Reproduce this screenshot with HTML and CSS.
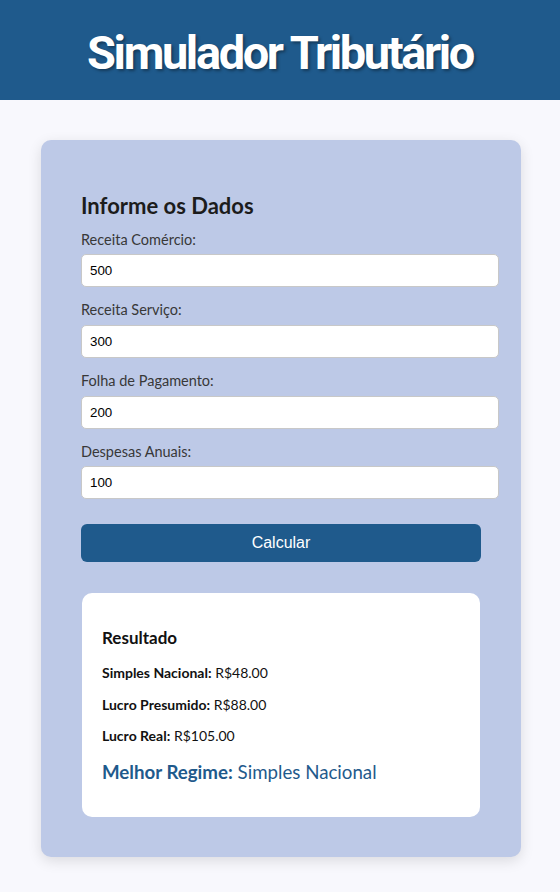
FILE: index.html
```html
<!DOCTYPE html>
<html lang="pt-BR">
<head>
<meta charset="utf-8">
<title>Simulador Tributário</title>
<link rel="stylesheet" href="styles.css">
</head>
<body>
<header class="topbar">
  <h1 class="title">Simulador Tributário</h1>
</header>
<main class="page">
  <section class="card">
    <h2 class="card-title">Informe os Dados</h2>
    <form class="form">
      <label class="field-label" for="com">Receita Comércio:</label>
      <input class="field-input" id="com" type="number" value="500">
      <label class="field-label" for="serv">Receita Serviço:</label>
      <input class="field-input" id="serv" type="number" value="300">
      <label class="field-label" for="folha">Folha de Pagamento:</label>
      <input class="field-input" id="folha" type="number" value="200">
      <label class="field-label" for="desp">Despesas Anuais:</label>
      <input class="field-input" id="desp" type="number" value="100">
      <button class="btn" type="button">Calcular</button>
    </form>
    <div class="result">
      <h3 class="result-title">Resultado</h3>
      <p class="result-line"><strong>Simples Nacional:</strong> R$48.00</p>
      <p class="result-line"><strong>Lucro Presumido:</strong> R$88.00</p>
      <p class="result-line"><strong>Lucro Real:</strong> R$105.00</p>
      <p class="best"><strong>Melhor Regime:</strong> Simples Nacional</p>
    </div>
  </section>
</main>
</body>
</html>
```
FILE: styles.css
```css
* { box-sizing: content-box; }
body {
  margin: 0;
  background: #f8f8fd;
  font-family: Lato, "Noto Sans", sans-serif;
  color: #1a1a1a;
}
.topbar {
  background: #1f5a8c;
  height: 100px;
  display: flex;
  justify-content: center;
  align-items: flex-start;
}
.title {
  margin: 24.5px 0 0;
  font-family: Roboto, sans-serif;
  font-weight: 700;
  font-size: 47px;
  letter-spacing: -2.4px;
  line-height: 56px;
  color: #ffffff;
  text-shadow: 2px 2px 3px rgba(0, 0, 0, 0.35);
}
.page {
  padding: 40px 39px 34px 41px;
}
.card {
  width: 400px;
  padding: 40px;
  background: #bdc9e7;
  border-radius: 10px;
  box-shadow: 0 4px 14px rgba(0, 0, 0, 0.12);
}
.card-title {
  margin: 12px 0 10.5px;
  font-size: 22px;
  line-height: 28px;
  font-weight: 700;
  color: #1c1c1c;
}
.form {
  display: flex;
  flex-direction: column;
  align-items: flex-start;
}
.field-label {
  font-size: 14.5px;
  line-height: 18.67px;
  color: #383838;
  margin-bottom: 5px;
}
.field-input {
  width: 400px;
  height: 15px;
  padding: 8px;
  margin: 0 0 14px;
  border: 1px solid #c8c8c8;
  border-radius: 5px;
  background: #fff;
  font-family: "Liberation Sans", Arial, sans-serif;
  font-size: 13.33px;
  color: #000;
  outline: none;
  -moz-appearance: textfield;
}
.field-input::-webkit-outer-spin-button,
.field-input::-webkit-inner-spin-button { -webkit-appearance: none; margin: 0; }
.btn {
  width: 400px;
  height: 38px;
  margin-top: 11px;
  border: none;
  border-radius: 6px;
  background: #1f5a8c;
  color: #fff;
  font-family: "Liberation Sans", Arial, sans-serif;
  font-size: 16px;
  padding: 0;
}
.result {
  margin: 31px 1px 0;
  padding: 20px;
  height: 184px;
  background: #fff;
  border-radius: 10px;
}
.result-title {
  margin: 15px 0 15px;
  font-size: 17px;
  line-height: 20px;
  font-weight: 700;
  color: #111;
}
.result-line {
  margin: 0 0 12px;
  font-size: 14px;
  line-height: 19.5px;
  color: #111;
}
.best {
  margin: 0;
  padding-top: 1px;
  font-size: 18.7px;
  line-height: 26px;
  color: #1f5a8c;
}
```
